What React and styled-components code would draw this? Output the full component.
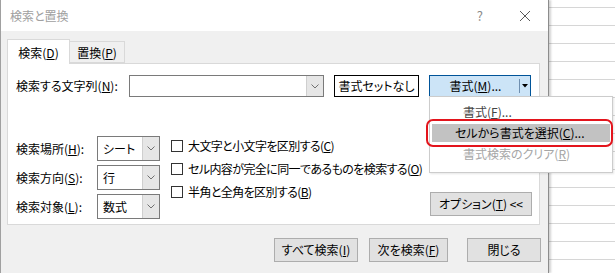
import styled, { createGlobalStyle } from "styled-components";

const Global = createGlobalStyle`
  body {
    margin: 0;
    font-family: "Noto Sans CJK JP", "Noto Sans", sans-serif;
    font-size: 12px;
    font-feature-settings: "palt";
    color: #000;
  }
  * { box-sizing: border-box; }
`;

const Page = styled.div`
  width: 615px;
  height: 273px;
  overflow: hidden;
  background-color: #fff;
  background-image: linear-gradient(to bottom, transparent 7px, #d6d6d6 7px, #d6d6d6 8px, transparent 8px);
  background-size: 100% 18px;
  position: relative;
`;

const Dialog = styled.div`
  position: relative;
  width: 549px;
  height: 273px;
  display: flex;
  flex-direction: column;
  background: #f0f0f0;
  border-left: 1px solid #a0a0a0;
  border-right: 1px solid #8c8c8c;
  box-shadow: 2px 0 2px rgba(0, 0, 0, 0.18);
`;

const TitleBar = styled.div`
  height: 31px;
  flex: none;
  display: flex;
  align-items: center;
  padding-left: 9px;
  background: #fff;
  color: #a0a0a0;
  font-size: 12px;
`;

const TitleTools = styled.div`
  margin-left: auto;
  display: flex;
  align-items: center;
  gap: 36px;
  padding-right: 17px;
  color: #8a8a8a;
  font-size: 13px;
`;

const Body = styled.div`
  flex: 1;
  padding: 8px 8px 0 6px;
  display: flex;
  flex-direction: column;
`;

const Tabs = styled.div`
  display: flex;
  align-items: flex-end;
  height: 24px;
`;

const Tab = styled.div`
  height: ${(p) => (p.$active ? "25px" : "22px")};
  width: ${(p) => p.$w}px;
  display: flex;
  align-items: center;
  justify-content: center;
  background: ${(p) => (p.$active ? "#fff" : "#f0f0f0")};
  border: 1px solid #d9d9d9;
  border-left: ${(p) => (p.$active ? "1px solid #d9d9d9" : "none")};
  border-bottom: ${(p) => (p.$active ? "none" : "1px solid #d9d9d9")};
  margin-bottom: ${(p) => (p.$active ? "-1px" : "0")};
  position: relative;
  z-index: ${(p) => (p.$active ? 1 : 0)};
  padding-top: ${(p) => (p.$active ? "1px" : "0")};
`;

const Panel = styled.div`
  height: 162px;
  background: #fff;
  border: 1px solid #d9d9d9;
  padding: 11px 7px 0 8px;
  display: flex;
  flex-direction: column;
`;

const FindRow = styled.div`
  display: flex;
  align-items: center;
  height: 22px;
`;

const Label = styled.span`
  width: ${(p) => p.$w}px;
  flex: none;
  white-space: nowrap;
  line-height: 16px;
`;

const Combo = styled.div`
  width: ${(p) => p.$w}px;
  height: ${(p) => p.$h}px;
  flex: none;
  display: flex;
  border: 1px solid #7a7a7a;
  background: #fff;
`;

const ComboText = styled.div`
  flex: 1;
  display: flex;
  align-items: center;
  padding-left: 5px;
  line-height: 16px;
`;

const ComboArrow = styled.div`
  width: 17px;
  display: flex;
  align-items: center;
  justify-content: center;
  background: #e6e6e6;
  border-left: 1px solid #cfcfcf;
`;

const PlainButton = styled.div`
  width: ${(p) => p.$w}px;
  height: ${(p) => p.$h || 22}px;
  flex: none;
  display: flex;
  align-items: center;
  justify-content: center;
  margin-left: ${(p) => p.$ml || 0}px;
  background: ${(p) => (p.$outlined ? "#fff" : "#e1e1e1")};
  border: 1px solid ${(p) => (p.$outlined ? "#000" : "#adadad")};
  white-space: nowrap;
  line-height: 16px;
`;

const SplitButton = styled.div`
  width: 102px;
  height: 22px;
  margin-left: 10px;
  display: flex;
  background: #cce4f7;
  border: 1px solid #005499;
`;

const SplitMain = styled.div`
  flex: 1;
  display: flex;
  align-items: center;
  justify-content: center;
  padding-left: 2px;
  line-height: 16px;
`;

const SplitArrow = styled.div`
  width: 11px;
  display: flex;
  align-items: center;
  justify-content: center;
  margin: 3px 0;
  border-left: 1px solid #6f8fb0;
`;

const OptionsRow = styled.div`
  display: flex;
  margin-top: 39px;
`;

const SelectGrid = styled.div`
  display: grid;
  grid-template-columns: 81px 63px;
  grid-auto-rows: 25px;
  row-gap: 4px;
  align-items: center;
`;

const Checks = styled.div`
  display: flex;
  flex-direction: column;
  margin-left: 11px;
  margin-top: -2px;
  letter-spacing: -0.6px;
`;

const CheckRow = styled.label`
  display: flex;
  align-items: center;
  gap: 5px;
  height: 23px;
  line-height: 16px;
  white-space: nowrap;
`;

const Box = styled.span`
  width: 12px;
  height: 12px;
  border: 1px solid #333;
  background: #fff;
  flex: none;
`;

const OptionButton = styled(PlainButton)`
  margin-left: auto;
  align-self: flex-end;
  margin-bottom: 3px;
`;

const Footer = styled.div`
  display: flex;
  padding-top: 13px;
  padding-left: 267px;
`;

const Menu = styled.div`
  position: absolute;
  left: 428px;
  top: 96px;
  width: 184px;
  height: 77px;
  background: #fff;
  border: 1px solid #cccccc;
  box-shadow: 1px 1px 2px rgba(0, 0, 0, 0.1);
  padding: 4px 2px;
  z-index: 5;
`;

const MenuItem = styled.div`
  height: ${(p) => (p.$hot ? 18 : 21)}px;
  display: flex;
  align-items: center;
  padding-left: ${(p) => p.$indent}px;
  color: ${(p) => (p.$disabled ? "#a6a6a6" : p.$hot ? "#000" : "#444")};
  background: ${(p) => (p.$hot ? "#c2c2c2" : "transparent")};
  margin: ${(p) => (p.$hot ? "2px 0 1px" : "0")};
  position: relative;
  line-height: 16px;
  white-space: nowrap;
`;

const Highlight = styled.div`
  position: absolute;
  left: -6px;
  right: -3px;
  top: -5px;
  bottom: -5px;
  border: 2px solid #e3141c;
  border-radius: 7px;
  pointer-events: none;
`;

function Chevron() {
  return (
    <svg width="8" height="5" viewBox="0 0 8 5">
      <path d="M0.5 0.5 L4 4 L7.5 0.5" fill="none" stroke="#707070" strokeWidth="1" />
    </svg>
  );
}

function Close() {
  return (
    <svg width="12" height="12" viewBox="0 0 12 12">
      <path d="M1 1 L11 11 M11 1 L1 11" stroke="#5a5a5a" strokeWidth="1" />
    </svg>
  );
}

function Caret() {
  return (
    <svg width="6" height="4" viewBox="0 0 6 4">
      <path d="M0 0 L6 0 L3 3.5 Z" fill="#000" />
    </svg>
  );
}

function SelectBox({ value }) {
  return (
    <Combo $w={63} $h={25}>
      <ComboText>{value}</ComboText>
      <ComboArrow>
        <Chevron />
      </ComboArrow>
    </Combo>
  );
}

function Check({ children }) {
  return (
    <CheckRow>
      <Box />
      <span>{children}</span>
    </CheckRow>
  );
}

export default function App() {
  return (
    <Page>
      <Global />
      <Dialog>
        <TitleBar>
          検索と置換
          <TitleTools>
            <span>?</span>
            <Close />
          </TitleTools>
        </TitleBar>
        <Body>
          <Tabs>
            <Tab $active $w={63}>
              <span>検索(<u>D</u>)</span>
            </Tab>
            <Tab $w={55}>
              <span>置換(<u>P</u>)</span>
            </Tab>
          </Tabs>
          <Panel>
            <FindRow>
              <Label $w={113}>
                検索する文字列(<u>N</u>):
              </Label>
              <Combo $w={195} $h={22}>
                <ComboText />
                <ComboArrow>
                  <Chevron />
                </ComboArrow>
              </Combo>
              <PlainButton $outlined $w={85} $ml={10}>
                書式セットなし
              </PlainButton>
              <SplitButton>
                <SplitMain>
                  <span>書式(<u>M</u>)...</span>
                </SplitMain>
                <SplitArrow>
                  <Caret />
                </SplitArrow>
              </SplitButton>
            </FindRow>
            <OptionsRow>
              <SelectGrid>
                <Label $w={81}>
                  検索場所(<u>H</u>):
                </Label>
                <SelectBox value="シート" />
                <Label $w={81}>
                  検索方向(<u>S</u>):
                </Label>
                <SelectBox value="行" />
                <Label $w={81}>
                  検索対象(<u>L</u>):
                </Label>
                <SelectBox value="数式" />
              </SelectGrid>
              <Checks>
                <Check>
                  大文字と小文字を区別する(<u>C</u>)
                </Check>
                <Check>
                  セル内容が完全に同一であるものを検索する(<u>O</u>)
                </Check>
                <Check>
                  半角と全角を区別する(<u>B</u>)
                </Check>
              </Checks>
              <OptionButton $w={102} $h={24}>
                <span>オプション(<u>T</u>) &lt;&lt;</span>
              </OptionButton>
            </OptionsRow>
          </Panel>
          <Footer>
            <PlainButton $w={84} $h={24}>
              <span>すべて検索(<u>I</u>)</span>
            </PlainButton>
            <PlainButton $w={79} $h={24} $ml={11}>
              <span>次を検索(<u>F</u>)</span>
            </PlainButton>
            <PlainButton $w={74} $h={24} $ml={19}>
              閉じる
            </PlainButton>
          </Footer>
        </Body>
        <Menu>
          <MenuItem $indent={31}>
            <span>書式(<u>F</u>)...</span>
          </MenuItem>
          <MenuItem $hot $indent={23}>
            <span>セルから書式を選択(<u>C</u>)...</span>
            <Highlight />
          </MenuItem>
          <MenuItem $disabled $indent={31}>
            <span>書式検索のクリア(<u>R</u>)</span>
          </MenuItem>
        </Menu>
      </Dialog>
    </Page>
  );
}
